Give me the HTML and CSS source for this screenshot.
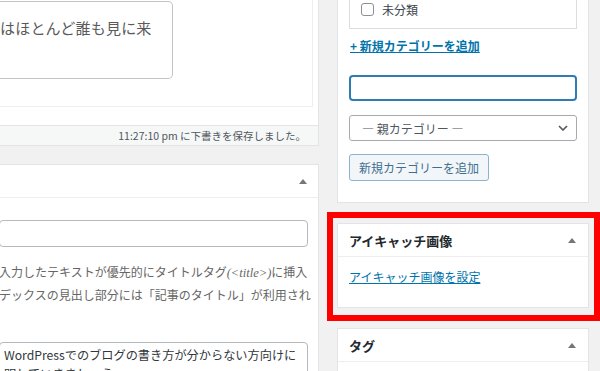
FILE: index.html
```html
<!DOCTYPE html>
<html lang="ja">
<head>
    <meta charset="UTF-8">
    <meta name="viewport" content="width=device-width, initial-scale=1.0">
    <title>投稿の編集</title>
    <link rel="stylesheet" href="styles.css">
</head>
<body>
    <div class="screen">
        <div class="main-col">
            <div class="postdiv">
                <div class="editor-area">
                    <div class="excerpt-box">はほとんど誰も見に来</div>
                </div>
                <div class="status-bar">11:27:10 pm に下書きを保存しました。</div>
            </div>

            <div class="postbox">
                <div class="postbox-header">
                    <h2 class="postbox-title"></h2>
                    <svg class="toggle" width="8" height="5" viewBox="0 0 8 5"><polygon points="4,0 8,5 0,5"/></svg>
                </div>
                <div class="postbox-inside">
                    <div class="text-field"></div>
                    <p class="desc">入力したテキストが優先的にタイトルタグ<i>(&lt;title&gt;)</i>に挿入<br>デックスの見出し部分には「記事のタイトル」が利用され</p>
                    <div class="text-area">WordPressでのブログの書き方が分からない方向けに<br>明していきましょう。</div>
                </div>
            </div>
        </div>

        <div class="side-col">
            <div class="side-box category-box">
                <div class="tabs-panel">
                    <label class="cat-item"><span class="checkbox"></span>未分類</label>
                </div>
                <a class="add-toggle" href="#">+ 新規カテゴリーを追加</a>
                <div class="new-cat-input"></div>
                <div class="parent-select">
                    <span>— 親カテゴリー —</span>
                    <svg width="10" height="6" viewBox="0 0 10 6"><polyline points="1,1 5,5 9,1" fill="none" stroke="#50575e" stroke-width="1.6"/></svg>
                </div>
                <button class="button">新規カテゴリーを追加</button>
            </div>

            <div class="side-box featured-box">
                <div class="side-header">
                    <h2 class="side-title">アイキャッチ画像</h2>
                    <svg class="toggle" width="8" height="5" viewBox="0 0 8 5"><polygon points="4,0 8,5 0,5"/></svg>
                </div>
                <div class="side-inside">
                    <a class="set-thumb" href="#">アイキャッチ画像を設定</a>
                </div>
                <div class="highlight"></div>
            </div>

            <div class="side-box tag-box">
                <div class="side-header">
                    <h2 class="side-title">タグ</h2>
                    <svg class="toggle" width="8" height="5" viewBox="0 0 8 5"><polygon points="4,0 8,5 0,5"/></svg>
                </div>
                <div class="side-inside tag-inside"></div>
            </div>
        </div>
    </div>
</body>
</html>
```

FILE: styles.css
```css
:root {
    --background: #f1f1f1;
    --box-border: #e2e4e7;
    --divider: #eeeeee;
    --text-title: #23282d;
    --text-body: #555555;
    --text-muted: #666666;
    --link: #0073aa;
    --focus: #2f7cb5;
    --mark: #ff0000;
}

* {
    margin: 0;
    padding: 0;
    box-sizing: border-box;
}

body {
    font-family: "Noto Sans CJK JP", "Noto Sans", sans-serif;
    background-color: var(--background);
    color: var(--text-body);
    height: 100vh;
    overflow: hidden;
}

.screen {
    display: flex;
    align-items: flex-start;
}

/* left column: editor + meta box, cropped at the left edge */
.main-col {
    width: 331px;
    margin-left: -12px;
    flex-shrink: 0;
}

.postdiv {
    margin-top: -1px;
    background: #fff;
    border: 1px solid var(--box-border);
}

.editor-area {
    height: 107px;
    margin-right: 5px;
    padding-top: 1px;
    border-right: 1px solid var(--divider);
    border-bottom: 1px solid var(--divider);
}

.excerpt-box {
    width: 184px;
    height: 78px;
    padding: 15px 8px 0 11px;
    border: 1px solid #c3c4c7;
    border-left: none;
    border-radius: 0 5px 5px 0;
    font-size: 15px;
    letter-spacing: 0.2px;
    line-height: 22px;
    white-space: nowrap;
    color: #5a5a5a;
}

.status-bar {
    height: 20px;
    margin-top: 18px;
    padding-right: 12px;
    background: #f6f7f7;
    border-top: 1px solid var(--box-border);
    font-size: 10.5px;
    line-height: 19px;
    text-align: right;
    color: #50575e;
}

.postbox {
    margin-top: 18px;
    background: #fff;
    border: 1px solid var(--box-border);
}

.postbox-header {
    height: 33px;
    display: flex;
    align-items: center;
    justify-content: space-between;
    padding-right: 11px;
    border-bottom: 1px solid var(--divider);
}

.toggle {
    fill: #72777c;
}

.postbox-inside {
    padding: 22px 10px 0 10px;
    height: 200px;
}

.text-field {
    height: 27px;
    border: 1px solid #b4b9be;
    border-radius: 4px;
}

.desc {
    margin-top: 14px;
    font-size: 12px;
    line-height: 22px;
    white-space: nowrap;
    color: var(--text-muted);
}

.desc i {
    font-family: "Liberation Serif", serif;
    font-size: 12.5px;
}

.text-area {
    margin-top: 36px;
    height: 60px;
    padding: 3px 4px;
    border: 1px solid #b4b9be;
    border-radius: 4px;
    font-size: 12.2px;
    line-height: 19px;
    white-space: nowrap;
    color: #32373c;
}

/* right column: sidebar meta boxes */
.side-col {
    width: 252px;
    margin-left: 18px;
    margin-top: -40px;
    flex-shrink: 0;
}

.side-box {
    background: #fff;
    border: 1px solid var(--box-border);
    margin-bottom: 20px;
}

.category-box {
    display: flex;
    flex-direction: column;
    align-items: flex-start;
    padding: 0 11px 21px;
}

.tabs-panel {
    width: 100%;
    height: 68px;
    display: flex;
    align-items: flex-end;
    padding: 0 11px 11px;
    border: 1px solid #dcdcde;
    border-top: none;
}

.cat-item {
    display: flex;
    align-items: center;
    gap: 8px;
    height: 16px;
    font-size: 12px;
    color: #3c434a;
}

.checkbox {
    width: 13px;
    height: 13px;
    border: 1px solid #8c8f94;
    border-radius: 3px;
    background: #fff;
}

.add-toggle {
    margin-top: 9px;
    padding-left: 1px;
    font-size: 12px;
    font-weight: bold;
    line-height: 16px;
    color: var(--link);
}

.new-cat-input {
    width: 100%;
    height: 26px;
    margin-top: 21px;
    border: 2px solid var(--focus);
    border-radius: 4px;
}

.parent-select {
    width: 100%;
    height: 26px;
    margin-top: 14px;
    display: flex;
    align-items: center;
    justify-content: space-between;
    padding: 0 8px 0 12px;
    border: 1px solid #a7aaad;
    border-radius: 3px;
    font-size: 12px;
    color: #50575e;
}

.button {
    height: 27px;
    margin-top: 13px;
    padding: 0 9px;
    font-family: inherit;
    font-size: 12px;
    color: #3d6f93;
    background: #f3f6f8;
    border: 1px solid #8ab4d0;
    border-radius: 3px;
}

.featured-box {
    position: relative;
}

.side-header {
    height: 33px;
    display: flex;
    align-items: center;
    justify-content: space-between;
    padding: 0 12px 0 11px;
    border-bottom: 1px solid var(--divider);
}

.side-title {
    font-size: 13px;
    font-weight: bold;
    color: var(--text-title);
}

.side-inside {
    padding: 12px 11px 22px;
}

.set-thumb {
    display: block;
    font-size: 12px;
    line-height: 16px;
    color: var(--link);
}

.tag-inside {
    height: 60px;
}

/* red annotation frame drawn over the featured image box */
.highlight {
    position: absolute;
    top: -12px;
    left: -11px;
    right: -12px;
    bottom: -14px;
    border: 6px solid var(--mark);
}
```
